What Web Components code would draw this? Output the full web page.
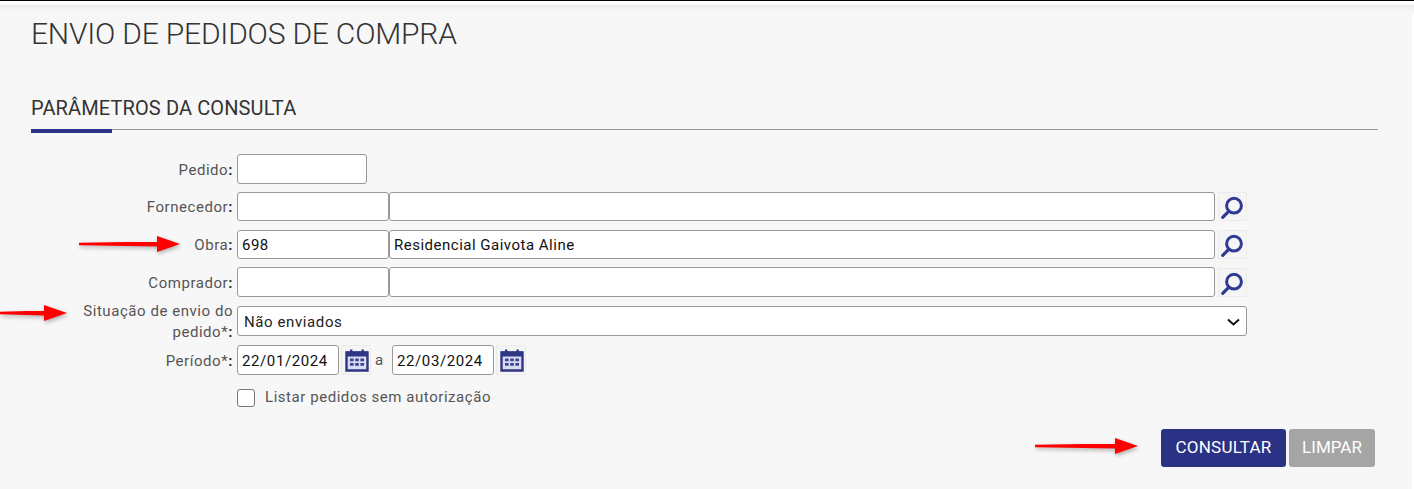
<!DOCTYPE html>
<html lang="pt-BR">
<head>
<meta charset="utf-8">
<title>Envio de pedidos de compra</title>
<style>
	html, body {
		margin: 0;
		height: 100%;
		background: #fff;
		overflow: hidden;
	}
	body {
		font-family: Roboto, "Liberation Sans", sans-serif;
	}
</style>
</head>
<body>
<envio-page>
	<page-title>ENVIO DE PEDIDOS DE COMPRA</page-title>
	<section-head>PARÂMETROS DA CONSULTA</section-head>

	<form-row label="Pedido:" style="--row-gap: 8px; --label-top: 3px">
		<text-field style="--w: 130px; --h: 30px"></text-field>
	</form-row>
	<form-row label="Fornecedor:" style="--row-gap: 9px">
		<text-field style="--w: 152px"></text-field>
		<text-field style="--w: 826px"></text-field>
		<icon-button icon="search"></icon-button>
	</form-row>
	<form-row label="Obra:" style="--row-gap: 8px">
		<text-field style="--w: 152px">698</text-field>
		<text-field style="--w: 826px">Residencial Gaivota Aline</text-field>
		<icon-button icon="search"></icon-button>
	</form-row>
	<form-row label="Comprador:" style="--row-gap: 9px; --label-top: 3px">
		<text-field style="--w: 152px; --h: 30px"></text-field>
		<text-field style="--w: 826px; --h: 30px"></text-field>
		<icon-button icon="search"></icon-button>
	</form-row>
	<form-row label="Situação de envio do pedido*:" style="--row-gap: 9px; --label-overflow: -8px">
		<select-field>Não enviados</select-field>
	</form-row>
	<form-row label="Período*:" style="--row-gap: 14px; --label-top: 3px">
		<text-field style="--w: 102px; --h: 30px; --spacing: .6px">22/01/2024</text-field>
		<icon-button icon="calendar"></icon-button>
		<span style="box-sizing: border-box; width: 21px; padding-left: 4px; color: #555; font-size: 15px; letter-spacing: .4px">a</span>
		<text-field style="--w: 102px; --h: 30px; --spacing: .6px">22/03/2024</text-field>
		<icon-button icon="calendar"></icon-button>
	</form-row>
	<form-row label="">
		<check-field>Listar pedidos sem autorização</check-field>
	</form-row>

	<form-actions>
		<action-button primary style="--w: 125px">CONSULTAR</action-button>
		<action-button style="--w: 86px; --spacing: 0">LIMPAR</action-button>
	</form-actions>

	<red-arrow style="--x: 79px; --y: 235px; --len: 101px"></red-arrow>
	<red-arrow style="--x: 0px; --y: 304px; --len: 67px"></red-arrow>
	<red-arrow style="--x: 1035px; --y: 437px; --len: 103px"></red-arrow>
</envio-page>

<script>
	const icons = {
		search: `<svg width="27" height="27" viewBox="0 0 27 27">
			<circle cx="15" cy="12.7" r="7.4" fill="none" stroke="#2f3a94" stroke-width="3"/>
			<path d="M8.7 19.3 L3.7 24.3" fill="none" stroke="#2f3a94" stroke-width="3.2" stroke-linecap="round"/>
		</svg>`,
		calendar: `<svg width="28" height="28" viewBox="0 0 28 28">
			<path d="M4.5 6.5 H25.5 V24.5 H4.5 Z" fill="#d9dcf0" stroke="#2f3683" stroke-width="2.4"/>
			<rect x="4" y="5.5" width="22" height="5" fill="#2f3683"/>
			<rect x="8" y="3.5" width="2.4" height="4" fill="#2f3683"/>
			<rect x="19.5" y="3.5" width="2.4" height="4" fill="#2f3683"/>
			<path fill="#3d4593" d="M8 12.5h3.6v2.8H8zM13.2 12.5h3.6v2.8h-3.6zM18.4 12.5h3.6v2.8h-3.6zM8 17h3.6v2.8H8zM13.2 17h3.6v2.8h-3.6zM18.4 17h3.6v2.8h-3.6z"/>
		</svg>`
	};

	class EnvioPage extends HTMLElement {
		connectedCallback() {
			this.attachShadow({ mode: 'open' }).innerHTML = `
			<style>
				:host {
					display: block;
					position: relative;
					box-sizing: border-box;
					width: 1412px;
					height: 489px;
					padding: 0 34px 0 31px;
					background: #f7f7f7;
					border-top: 1px solid #000;
				}
				.shadow {
					position: absolute;
					left: 0;
					right: -2px;
					top: -1px;
					height: 13px;
					border-top: 1px solid #000;
					background: linear-gradient(#fff 0, #fff 3px, #eeeeee 4px, #f7f7f7 12px);
				}
			</style>
			<div class="shadow"></div>
			<slot></slot>`;
		}
	}

	class PageTitle extends HTMLElement {
		connectedCallback() {
			this.attachShadow({ mode: 'open' }).innerHTML = `
			<style>
				:host {
					display: block;
					position: relative;
					padding-top: 15px;
					height: 75px;
					box-sizing: border-box;
					font-size: 30px;
					line-height: 36px;
					font-weight: 300;
					letter-spacing: -.2px;
					color: #333;
				}
			</style>
			<slot></slot>`;
		}
	}

	class SectionHead extends HTMLElement {
		connectedCallback() {
			this.attachShadow({ mode: 'open' }).innerHTML = `
			<style>
				:host {
					display: block;
					position: relative;
					box-sizing: border-box;
					height: 54px;
					padding-top: 20px;
					margin-bottom: 24px;
					border-bottom: 1px solid #999;
					font-size: 20px;
					line-height: 24px;
					letter-spacing: .12px;
					color: #333;
				}
				.accent {
					position: absolute;
					left: 0;
					bottom: -4px;
					width: 81px;
					height: 4px;
					background: #2b3285;
				}
			</style>
			<slot></slot>
			<div class="accent"></div>`;
		}
	}

	class FormRow extends HTMLElement {
		connectedCallback() {
			const label = this.getAttribute('label');
			const text = label.replace(/:$/, '');
			const colon = label.endsWith(':') ? '<b>:</b>' : '';
			const split = text.lastIndexOf(' ') + 1;
			const first = split ? `<span>${text.slice(0, split)}</span><br>` : '';
			this.attachShadow({ mode: 'open' }).innerHTML = `
			<style>
				:host {
					display: grid;
					grid-template-columns: 202px 1fr;
					column-gap: 4px;
					align-items: center;
					margin-bottom: var(--row-gap, 8px);
				}
				.label {
					margin-block: var(--label-overflow, 0);
					padding-top: var(--label-top, 1px);
					text-align: right;
					font-size: 15px;
					line-height: 21px;
					letter-spacing: .55px;
					color: #555;
				}
				b {
					color: #333;
				}
				.fields {
					display: flex;
					align-items: center;
				}
			</style>
			<div class="label">${first}<span>${text.slice(split)}</span>${colon}</div>
			<div class="fields"><slot></slot></div>`;
		}
	}

	class TextField extends HTMLElement {
		connectedCallback() {
			this.attachShadow({ mode: 'open' }).innerHTML = `
			<style>
				:host {
					display: flex;
					align-items: center;
					box-sizing: border-box;
					width: var(--w, 152px);
					height: var(--h, 29px);
					padding: 1px 4px 0;
					background: #fff;
					border: 1px solid #999;
					border-radius: 3px;
					font-size: 15px;
					letter-spacing: var(--spacing, .5px);
					color: #111;
					white-space: nowrap;
				}
			</style>
			<slot></slot>`;
		}
	}

	class SelectField extends HTMLElement {
		connectedCallback() {
			this.attachShadow({ mode: 'open' }).innerHTML = `
			<style>
				:host {
					display: flex;
					align-items: center;
					justify-content: space-between;
					box-sizing: border-box;
					width: 1010px;
					height: 30px;
					padding: 1px 6px 0 6px;
					background: #fff;
					border: 1px solid #999;
					border-radius: 3px;
					font-size: 15px;
					letter-spacing: .6px;
					color: #222;
				}
				svg {
					display: block;
				}
			</style>
			<slot></slot>
			<svg width="13" height="8" viewBox="0 0 13 8"><path d="M1 1.5 L6.5 6.5 L12 1.5" fill="none" stroke="#111" stroke-width="2"/></svg>`;
		}
	}

	class IconButton extends HTMLElement {
		connectedCallback() {
			const calendar = this.getAttribute('icon') == 'calendar';
			this.attachShadow({ mode: 'open' }).innerHTML = `
			<style>
				:host {
					display: block;
					box-sizing: border-box;
					width: ${calendar ? 30 : 29}px;
					height: ${calendar ? 30 : 29}px;
					margin-left: ${calendar ? 2 : 3}px;
					background: #f5f5f5;
					border: 1px solid #ebebeb;
				}
				svg {
					display: block;
				}
			</style>
			${icons[this.getAttribute('icon')]}`;
		}
	}

	class CheckField extends HTMLElement {
		connectedCallback() {
			this.attachShadow({ mode: 'open' }).innerHTML = `
			<style>
				:host {
					display: flex;
					align-items: center;
					gap: 10px;
					height: 18px;
					font-size: 15px;
					letter-spacing: .55px;
					color: #555;
				}
				.box {
					box-sizing: border-box;
					width: 18px;
					height: 18px;
					background: #fff;
					border: 1.5px solid #777;
					border-radius: 3px;
				}
				.text {
					margin-top: -3px;
				}
			</style>
			<div class="box"></div>
			<div class="text"><slot></slot></div>`;
		}
	}

	class FormActions extends HTMLElement {
		connectedCallback() {
			this.attachShadow({ mode: 'open' }).innerHTML = `
			<style>
				:host {
					display: flex;
					justify-content: flex-end;
					gap: 3px;
					margin-top: 22px;
					padding-right: 3px;
				}
			</style>
			<slot></slot>`;
		}
	}

	class ActionButton extends HTMLElement {
		connectedCallback() {
			this.attachShadow({ mode: 'open' }).innerHTML = `
			<style>
				:host {
					display: block;
					box-sizing: border-box;
					width: var(--w);
					height: 38px;
					background: #a5a5a5;
					border-radius: 3px;
					font-size: 17px;
					letter-spacing: var(--spacing, .25px);
					line-height: 36px;
					text-align: center;
					color: #fff;
				}
				:host([primary]) {
					background: #2b3285;
				}
			</style>
			<slot></slot>`;
		}
	}

	class RedArrow extends HTMLElement {
		connectedCallback() {
			this.attachShadow({ mode: 'open' }).innerHTML = `
			<style>
				:host {
					display: flex;
					align-items: center;
					position: absolute;
					left: var(--x);
					top: var(--y);
					width: var(--len);
					height: 16px;
					filter: drop-shadow(1px 2px 2px rgba(0, 0, 0, .3));
				}
				.shaft {
					flex: 1;
					height: 5px;
					background: #f00;
					clip-path: polygon(0 25%, 100% 0, 100% 100%, 0 75%);
				}
				.head {
					width: 0;
					height: 0;
					border-left: 23px solid #f00;
					border-top: 8px solid transparent;
					border-bottom: 8px solid transparent;
				}
			</style>
			<div class="shaft"></div>
			<div class="head"></div>`;
		}
	}

	customElements.define('envio-page', EnvioPage);
	customElements.define('page-title', PageTitle);
	customElements.define('section-head', SectionHead);
	customElements.define('form-row', FormRow);
	customElements.define('text-field', TextField);
	customElements.define('select-field', SelectField);
	customElements.define('icon-button', IconButton);
	customElements.define('check-field', CheckField);
	customElements.define('form-actions', FormActions);
	customElements.define('action-button', ActionButton);
	customElements.define('red-arrow', RedArrow);
</script>
</body>
</html>
